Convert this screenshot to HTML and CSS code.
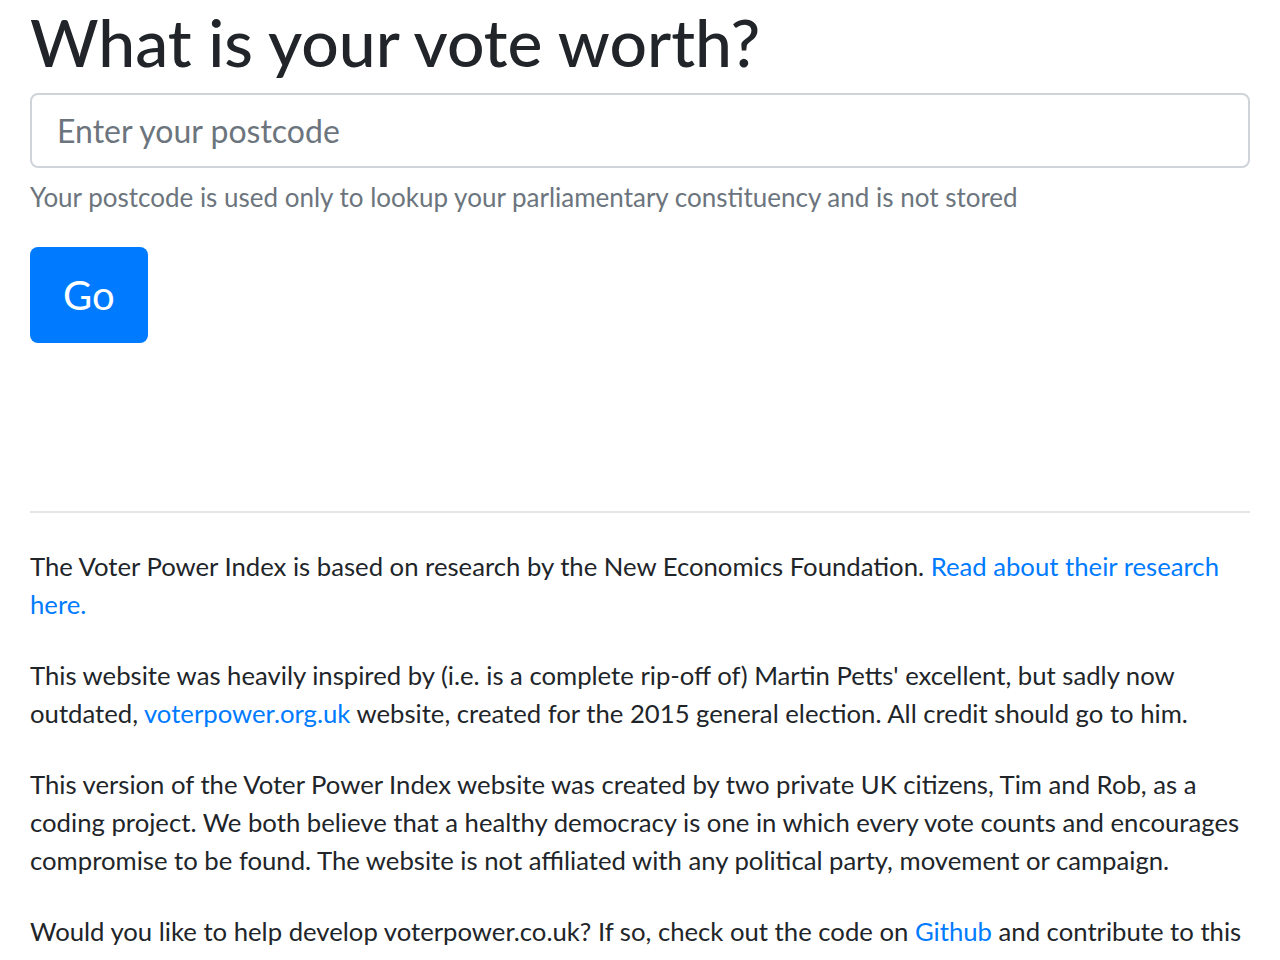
FILE: index.html
```html
<!DOCTYPE html>
<html lang="en">
<head>
<meta charset="utf-8">
<title>Voter Power</title>
<link rel="stylesheet" href="styles.css">
</head>
<body>
<main class="page">
  <h1 class="title">What is your vote worth?</h1>
  <form class="lookup">
    <input class="postcode" type="text" placeholder="Enter your postcode">
    <small class="hint">Your postcode is used only to lookup your parliamentary constituency and is not stored</small>
    <button class="go" type="button">Go</button>
  </form>
  <hr class="divider">
  <section class="about">
    <p>The Voter Power Index is based on research by the New Economics Foundation. <a href="#">Read about their research here.</a></p>
    <p>This website was heavily inspired by (i.e. is a complete rip-off of) Martin Petts' excellent, but sadly now outdated, <a href="#">voterpower.org.uk</a> website, created for the 2015 general election. All credit should go to him.</p>
    <p>This version of the Voter Power Index website was created by two private UK citizens, Tim and Rob, as a coding project. We both believe that a healthy democracy is one in which every vote counts and encourages compromise to be found. The website is not affiliated with any political party, movement or campaign.</p>
    <p>Would you like to help develop voterpower.co.uk? If so, check out the code on <a href="#">Github</a> and contribute to this project.</p>
  </section>
</main>
</body>
</html>
```
FILE: styles.css
```css
html, body {
  margin: 0;
  padding: 0;
  background: #ffffff;
}
body {
  font-family: Lato, "Noto Sans", sans-serif;
  color: #212529;
  font-size: 25.7px;
  line-height: 38px;
}
.page {
  padding: 4px 30px 0 30px;
}
.title {
  margin: 0 0 14px 0;
  font-size: 66px;
  line-height: 75px;
  font-weight: 500;
  color: #212529;
}
.lookup {
  display: flex;
  flex-direction: column;
  align-items: flex-start;
}
.postcode {
  box-sizing: border-box;
  width: 100%;
  height: 75px;
  padding: 0 25px;
  border: 2px solid #ced4da;
  border-radius: 8px;
  font-family: inherit;
  font-size: 32px;
  color: #495057;
  background: #fff;
  outline: none;
}
.postcode::placeholder {
  color: #6c757d;
  opacity: 1;
}
.hint {
  margin-top: 14px;
  font-size: 26px;
  line-height: 30px;
  color: #6c757d;
}
.go {
  margin-top: 35px;
  padding: 18px 33px;
  font-family: inherit;
  font-size: 40px;
  line-height: 60px;
  color: #fff;
  background: #007bff;
  border: 0;
  border-radius: 8px;
}
.divider {
  margin: 168px 0 0 0;
  border: 0;
  border-top: 2px solid #e6e6e6;
}
.about {
  padding-top: 34px;
}
.about p {
  margin: 0 0 33px 0;
}
.about a {
  color: #007bff;
  text-decoration: none;
}
```
